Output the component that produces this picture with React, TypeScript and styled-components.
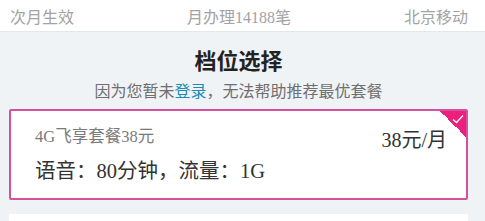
import React from 'react';
import styled, { createGlobalStyle } from 'styled-components';

const GlobalStyle = createGlobalStyle`
  html, body {
    margin: 0;
    padding: 0;
    background: #eff3f5;
    font-family: "Liberation Serif", "Noto Sans CJK SC", serif;
  }
`;

const Page = styled.div`
  width: 485px;
  height: 221px;
  overflow: hidden;
  background: #eff3f5;
`;

const TopBar = styled.div`
  height: 31px;
  background: #fff;
  border-bottom: 1px solid #e3e8eb;
  display: flex;
  align-items: center;
  justify-content: space-between;
  padding: 0 17px 0 10px;
  font-size: 16px;
  color: #a3a3a3;
`;

const Body = styled.div`
  padding: 0 17px 0 9px;
  display: flex;
  flex-direction: column;
  align-items: stretch;
`;

const Title = styled.div`
  margin-top: 12px;
  text-align: center;
  font-family: "Noto Sans CJK SC", sans-serif;
  font-weight: 700;
  font-size: 22px;
  line-height: 30px;
  color: #222;
`;

const Hint = styled.div`
  margin-top: 5px;
  text-align: center;
  font-family: "Noto Sans CJK SC", sans-serif;
  font-size: 16px;
  line-height: 22px;
  color: #6f6f6f;
`;

const LoginLink = styled.span`
  color: #1b8cb5;
`;

const PlanCard = styled.div<{ $selected?: boolean }>`
  position: relative;
  margin-top: 8px;
  height: 91px;
  background: #fff;
  border: 2px solid ${p => (p.$selected ? '#d6509c' : '#fff')};
  border-radius: 2px;
  overflow: hidden;
  display: flex;
  justify-content: space-between;
  padding: 15px 19px 0 24px;
  box-sizing: border-box;
`;

const PlanInfo = styled.div`
  display: flex;
  flex-direction: column;
  gap: 10px;
`;

const PlanName = styled.div`
  font-size: 16.5px;
  line-height: 22px;
  color: #7a7a7a;
`;

const PlanDetail = styled.div`
  font-size: 20.5px;
  line-height: 26px;
  color: #333;
`;

const Price = styled.div`
  margin-top: 1px;
  font-size: 20px;
  line-height: 26px;
  color: #333;
`;

const Corner = styled.div`
  position: absolute;
  top: 0;
  right: 0;
  width: 26px;
  height: 26px;
  background: linear-gradient(45deg, transparent 50%, #ec1f7c 50%);
`;

const Check = styled.svg`
  position: absolute;
  top: 3px;
  right: 2px;
`;

const NextCard = styled.div`
  margin-top: 14px;
  height: 40px;
  background: #fff;
`;

export default function App() {
  return (
    <Page>
      <GlobalStyle />
      <TopBar>
        <span>次月生效</span>
        <span>月办理14188笔</span>
        <span>北京移动</span>
      </TopBar>
      <Body>
        <Title>档位选择</Title>
        <Hint>
          因为您暂未<LoginLink>登录</LoginLink>，无法帮助推荐最优套餐
        </Hint>
        <PlanCard $selected>
          <PlanInfo>
            <PlanName>4G飞享套餐38元</PlanName>
            <PlanDetail>语音：80分钟，流量：1G</PlanDetail>
          </PlanInfo>
          <Price>38元/月</Price>
          <Corner>
            <Check width="12" height="10" viewBox="0 0 12 10">
              <path d="M1 5.5 L4.5 8.5 L11 1.5" fill="none" stroke="#fff" strokeWidth="1.3" />
            </Check>
          </Corner>
        </PlanCard>
        <NextCard />
      </Body>
    </Page>
  );
}
